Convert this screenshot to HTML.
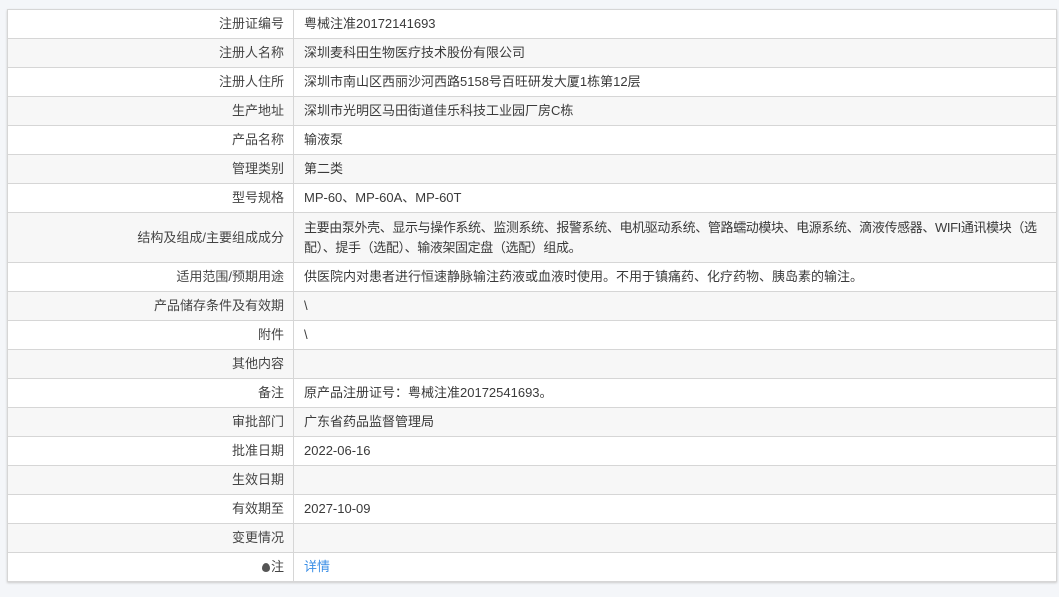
<!DOCTYPE html>
<html><head><meta charset="utf-8"><style>
html,body{margin:0;padding:0;background:#f4f6f9;width:1059px;height:597px;overflow:hidden}
table{position:absolute;left:7px;top:9px;width:1050px;table-layout:fixed;border-collapse:collapse;background:#fff;font-family:"Liberation Sans","Noto Sans CJK SC",sans-serif;font-size:13px;color:#3a3a3a;box-shadow:0 1px 2px #ccc}
td{border:1px solid #d6d6d6;height:28px;padding:0 10px;line-height:20px;overflow:hidden}
td.l{width:266px;text-align:right;padding-right:9px;color:#444}
tr:nth-child(even) td{background:#f7f7f7}
a{color:#3a8ee6;text-decoration:none}
.nw{white-space:nowrap;letter-spacing:-0.38px}
</style></head><body>
<table>
<tr><td class="l">注册证编号</td><td>粤械注准20172141693</td></tr>
<tr><td class="l">注册人名称</td><td>深圳麦科田生物医疗技术股份有限公司</td></tr>
<tr><td class="l">注册人住所</td><td>深圳市南山区西丽沙河西路5158号百旺研发大厦1栋第12层</td></tr>
<tr><td class="l">生产地址</td><td>深圳市光明区马田街道佳乐科技工业园厂房C栋</td></tr>
<tr><td class="l">产品名称</td><td>输液泵</td></tr>
<tr><td class="l">管理类别</td><td>第二类</td></tr>
<tr><td class="l">型号规格</td><td>MP-60、MP-60A、MP-60T</td></tr>
<tr><td class="l" style="height:49px">结构及组成/主要组成成分</td><td><div class="nw">主要由泵外壳、显示与操作系统、监测系统、报警系统、电机驱动系统、管路蠕动模块、电源系统、滴液传感器、WIFI通讯模块（选</div><div class="nw">配）、提手（选配）、输液架固定盘（选配）组成。</div></td></tr>
<tr><td class="l">适用范围/预期用途</td><td>供医院内对患者进行恒速静脉输注药液或血液时使用。不用于镇痛药、化疗药物、胰岛素的输注。</td></tr>
<tr><td class="l">产品储存条件及有效期</td><td>\</td></tr>
<tr><td class="l">附件</td><td>\</td></tr>
<tr><td class="l">其他内容</td><td></td></tr>
<tr><td class="l">备注</td><td>原产品注册证号：粤械注准20172541693。</td></tr>
<tr><td class="l">审批部门</td><td>广东省药品监督管理局</td></tr>
<tr><td class="l">批准日期</td><td>2022-06-16</td></tr>
<tr><td class="l">生效日期</td><td></td></tr>
<tr><td class="l">有效期至</td><td>2027-10-09</td></tr>
<tr><td class="l">变更情况</td><td></td></tr>
<tr><td class="l"><span style="display:inline-block;width:8px;height:9px;border-radius:50% 50% 50% 50%/60% 60% 40% 40%;background:#555;vertical-align:-1px;margin-right:1px"></span>注</td><td><a>详情</a></td></tr>
</table>
</body></html>
